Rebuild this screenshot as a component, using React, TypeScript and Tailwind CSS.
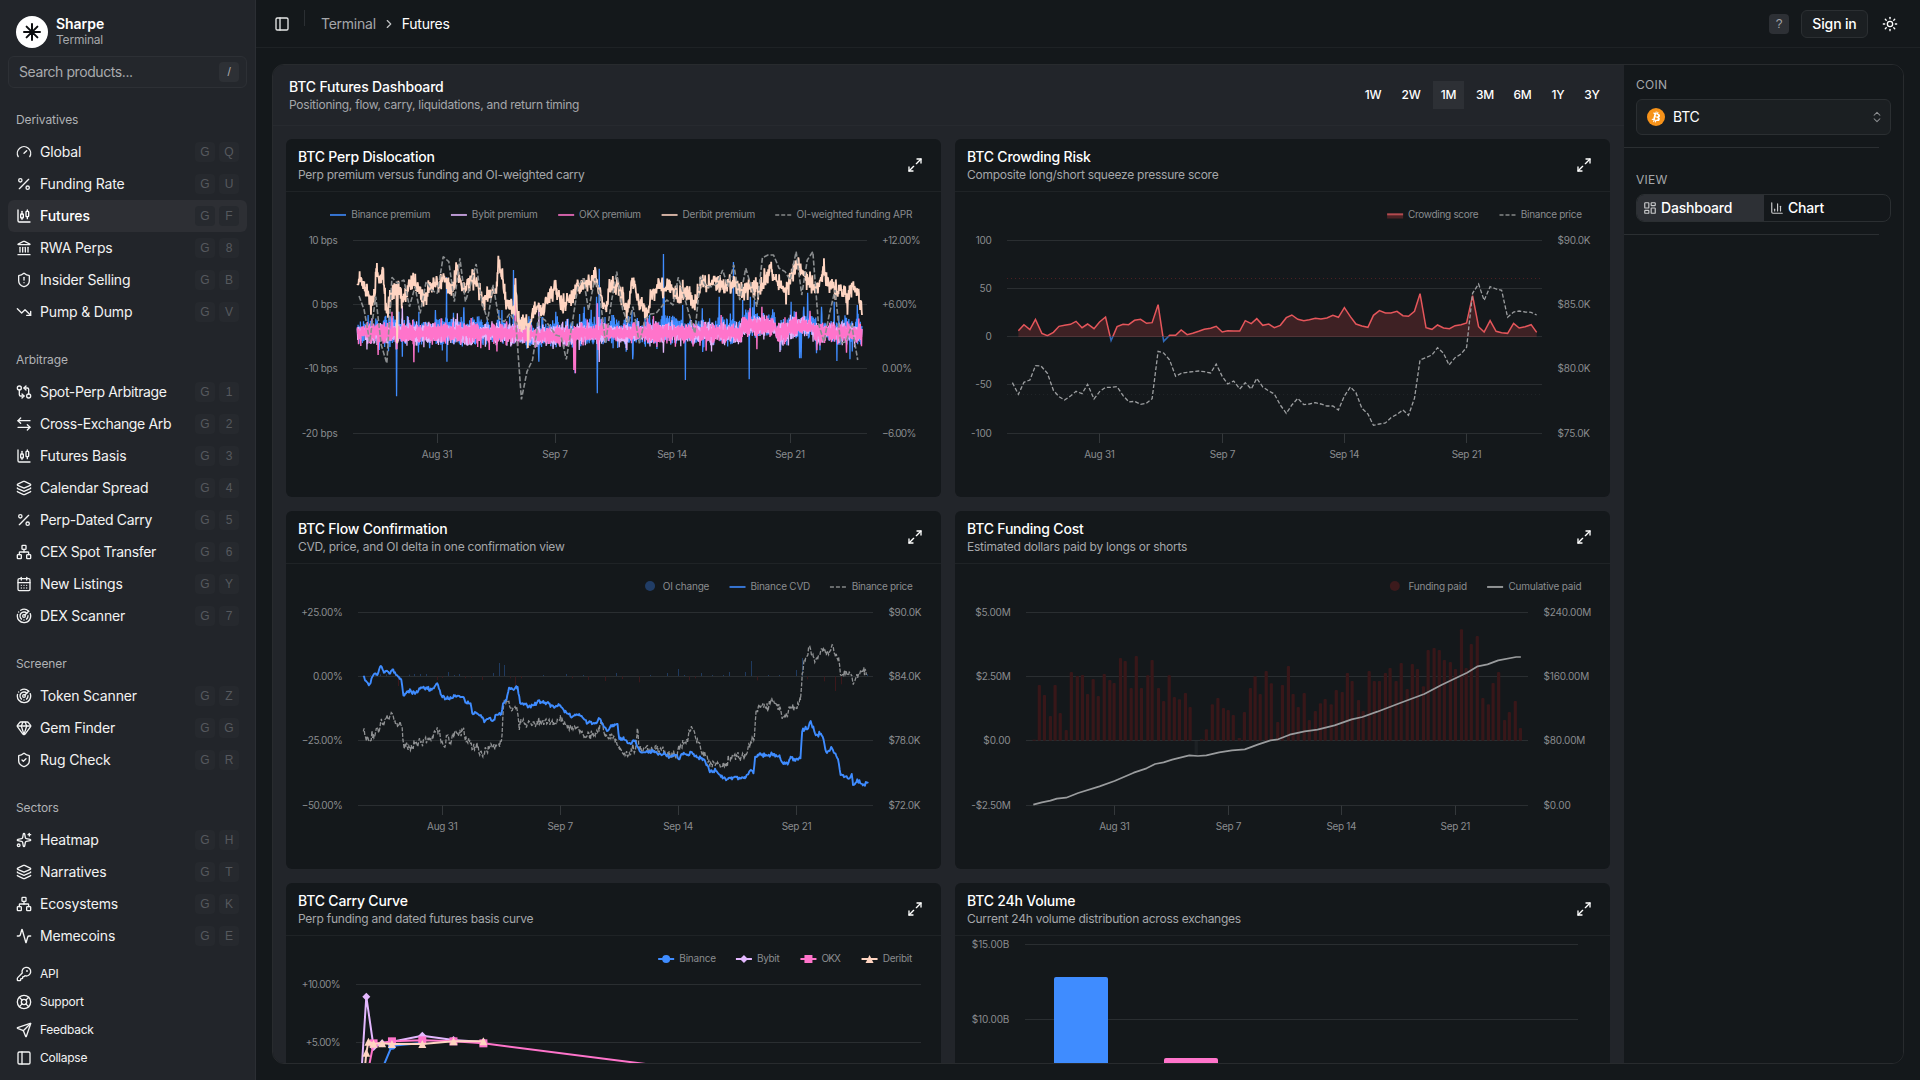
import React from "react";
import {
  Activity,
  CalendarDays,
  ChartCandlestick,
  ChevronRight,
  ChevronsUpDown,
  Gem,
  GitCompareArrows,
  KeyRound,
  Landmark,
  Layers,
  LayoutDashboard,
  LifeBuoy,
  Maximize2,
  Network,
  PanelLeft,
  Percent,
  Radar,
  Send,
  ShieldAlert,
  ShieldCheck,
  Sparkles,
  Sun,
  TrendingDown,
} from "lucide-react";

type IconType = React.ComponentType<{ className?: string; strokeWidth?: number }>;

const svgBase = {
  viewBox: "0 0 24 24",
  fill: "none",
  stroke: "currentColor",
  strokeLinecap: "round" as const,
  strokeLinejoin: "round" as const,
};

const GaugeIcon: IconType = ({ className }) => (
  <svg {...svgBase} strokeWidth={2} className={className}>
    <path d="m12 14 4-4" />
    <path d="M3.34 19a10 10 0 1 1 17.32 0" />
  </svg>
);

const SwapIcon: IconType = ({ className }) => (
  <svg {...svgBase} strokeWidth={2} className={className}>
    <path d="M21 7H3" />
    <path d="m7 3-4 4 4 4" />
    <path d="M3 17h18" />
    <path d="m17 13 4 4-4 4" />
  </svg>
);

const ChartColumnIcon: IconType = ({ className }) => (
  <svg {...svgBase} strokeWidth={2} className={className}>
    <path d="M3 3v16a2 2 0 0 0 2 2h16" />
    <path d="M18 17V9" />
    <path d="M13 17V5" />
    <path d="M8 17v-3" />
  </svg>
);

type Item = [string, IconType, string];

const groups: { title: string; items: Item[] }[] = [
  {
    title: "Derivatives",
    items: [
      ["Global", GaugeIcon, "Q"],
      ["Funding Rate", Percent, "U"],
      ["Futures", ChartCandlestick, "F"],
      ["RWA Perps", Landmark, "8"],
      ["Insider Selling", ShieldAlert, "B"],
      ["Pump & Dump", TrendingDown, "V"],
    ],
  },
  {
    title: "Arbitrage",
    items: [
      ["Spot-Perp Arbitrage", GitCompareArrows, "1"],
      ["Cross-Exchange Arb", SwapIcon, "2"],
      ["Futures Basis", ChartCandlestick, "3"],
      ["Calendar Spread", Layers, "4"],
      ["Perp-Dated Carry", Percent, "5"],
      ["CEX Spot Transfer", Network, "6"],
      ["New Listings", CalendarDays, "Y"],
      ["DEX Scanner", Radar, "7"],
    ],
  },
  {
    title: "Screener",
    items: [
      ["Token Scanner", Radar, "Z"],
      ["Gem Finder", Gem, "G"],
      ["Rug Check", ShieldCheck, "R"],
    ],
  },
  {
    title: "Sectors",
    items: [
      ["Heatmap", Sparkles, "H"],
      ["Narratives", Layers, "T"],
      ["Ecosystems", Network, "K"],
      ["Memecoins", Activity, "E"],
    ],
  },
];

function Kbd({ children }: { children: string }) {
  return (
    <kbd className="flex size-5 items-center justify-center rounded-sm bg-[#26292e] font-['Liberation_Sans'] text-xs text-[#56595e]">
      {children}
    </kbd>
  );
}

function Sidebar() {
  const footer: [string, IconType][] = [
    ["API", KeyRound],
    ["Support", LifeBuoy],
    ["Feedback", Send],
    ["Collapse", PanelLeft],
  ];
  return (
    <aside className="flex h-full w-64 shrink-0 flex-col border-r border-[#2b2e33] bg-[#22252a] px-2 pt-4 pb-2">
      <div className="flex h-8 items-center gap-2 pl-2">
        <div className="flex size-8 items-center justify-center rounded-full bg-white">
          <svg viewBox="0 0 18 18" className="size-[18px]" stroke="#0b0d0f" strokeWidth="2" strokeLinecap="round">
            <path d="M9 1v16M1 9h16M3.6 3.6l10.8 10.8M14.4 3.6L3.6 14.4" />
          </svg>
        </div>
        <div className="flex flex-col pb-0.5">
          <span className="text-sm leading-[17px] font-semibold tracking-[-0.05px] text-white">Sharpe</span>
          <span className="text-xs leading-4 tracking-[-0.2px] text-[#a5a7aa]">Terminal</span>
        </div>
      </div>
      <div className="mt-2 flex h-8 shrink-0 items-center justify-between rounded-md border border-[#2d3035] bg-[#24272c] pr-[7px] pl-2.5 text-sm tracking-[-0.42px] text-[#a9abae]">
        <span>Search products...</span>
        <kbd className="flex size-5 items-center justify-center rounded-sm bg-[#2d3035] font-['Liberation_Sans'] text-xs text-[#a9abae]">/</kbd>
      </div>
      <nav className="mt-4 flex flex-col gap-4">
        {groups.map((g) => (
          <div key={g.title}>
            <div className="flex h-8 items-center px-2 text-xs tracking-[-0.1px] text-[#b0b2b5]">{g.title}</div>
            {g.items.map(([name, Icon, key]) => (
              <div
                key={name}
                className={
                  name === "Futures"
                    ? "flex h-8 items-center gap-2 rounded-md bg-[#2d2f34] px-2 text-sm font-medium text-white"
                    : "flex h-8 items-center gap-2 rounded-md px-2 text-sm text-[#f2f3f3]"
                }
              >
                <Icon className="size-4 shrink-0" />
                <span
                  className={
                    name.length > 15
                      ? "flex-1 tracking-[-0.35px] whitespace-nowrap"
                      : name === "Futures"
                        ? "flex-1 tracking-[-0.05px] whitespace-nowrap"
                        : "flex-1 tracking-[-0.17px] whitespace-nowrap"
                  }
                >
                  {name}
                </span>
                <span className="flex gap-1">
                  <Kbd>G</Kbd>
                  <Kbd>{key}</Kbd>
                </span>
              </div>
            ))}
          </div>
        ))}
      </nav>
      <div className="mt-auto">
        {footer.map(([name, Icon]) => (
          <div key={name} className="flex h-7 items-center gap-2 px-2 text-xs tracking-[-0.25px] text-[#f2f3f3]">
            <Icon className="size-4 shrink-0" />
            <span>{name}</span>
          </div>
        ))}
      </div>
    </aside>
  );
}

function Header() {
  return (
    <header className="flex h-12 shrink-0 items-center justify-between border-b border-[#1e2225] pr-[22px] pl-[18px]">
      <div className="flex items-center text-sm tracking-[-0.25px]">
        <PanelLeft className="size-4 text-[#e6e7e7]" />
        <div className="mr-4 ml-3.5 h-4 w-px -translate-y-1.5 bg-[#2b2f33]" />
        <span className="text-[#a5a7aa]">Terminal</span>
        <ChevronRight className="mx-1.5 size-3.5 text-[#c0c2c4]" />
        <span className="text-white">Futures</span>
      </div>
      <div className="flex items-center">
        <kbd className="mr-3 flex size-5 items-center justify-center rounded-sm bg-[#2d3035] font-['Liberation_Sans'] text-xs text-[#a5a7aa]">?</kbd>
        <button className="mr-3.5 h-7 w-[67px] rounded-md border border-[#2b2f32] bg-[#1b1f22] text-sm font-medium tracking-[-0.15px] text-white">Sign in</button>
        <Sun className="size-4 text-white" />
      </div>
    </header>
  );
}

/* Chart data is stored in plot units: 1568 across 670px and 3 per pixel down. */
const KX = 670 / 1568;
const KY = 1 / 3;
type Pt = [number, number];

function parse(s: string): Pt[] {
  return s
    .trim()
    .split(/\s+/)
    .map((p) => p.split(",").map(Number) as Pt);
}

function line(pts: Pt[]): string {
  return pts.map(([x, y], i) => (i ? "L" : "M") + (x * KX).toFixed(2) + " " + (y * KY).toFixed(2)).join("");
}

function rng(seed: number) {
  let s = seed;
  return () => {
    s = (s * 1664525 + 1013904223) % 4294967296;
    return s / 4294967296;
  };
}

function noisy(anchors: Pt[], step: number, amp: number, seed: number): Pt[] {
  const r = rng(seed);
  const out: Pt[] = [];
  for (let i = 0; i < anchors.length - 1; i++) {
    const [x0, y0] = anchors[i];
    const [x1, y1] = anchors[i + 1];
    out.push([x0, y0]);
    for (let x = x0 + step; x < x1; x += step) {
      const t = (x - x0) / (x1 - x0);
      out.push([x, y0 + (y1 - y0) * t + (r() + r() - 1) * amp]);
    }
  }
  out.push(anchors[anchors.length - 1]);
  return out;
}

const BAND_STEP = 0.9;

function band(seed: number, up: number, down: number, tail: number, spikes: Pt[]): Pt[] {
  const r = rng(seed);
  const out: Pt[] = [];
  let side = 1;
  let swell = 1;
  for (let x = 181; x <= 1362; x += BAND_STEP) {
    let c = 428;
    if (x > 540 && x < 690) c = 435;
    if (x > 1080 && x < 1160) c = 408;
    if (x > 1190 && x < 1250) c = 410;
    side = -side;
    swell += (r() - 0.5) * 0.4;
    swell = Math.min(1.3, Math.max(0.75, swell));
    let d = (0.2 + 0.8 * r()) * (side < 0 ? up : down) * swell;
    if (r() < 0.1) d += r() * tail;
    out.push([x, c + side * d]);
  }
  spikes.forEach(([x, y]) => {
    const i = Math.round((x - 181) / BAND_STEP);
    if (out[i]) out[i] = [out[i][0], y];
  });
  return out;
}

const binancePremium = band(
  11, 41, 30, 32,
  parse("273,619 286,500 350,475 364,360 391,515 390,262 430,352 512,360 546,240 606,515 645,365 690,550 701,372 712,350 743,610 747,236 741,320 780,375 824,360 825,508 897,192 899,320 942,345 949,570 988,355 989,486 1028,320 1061,216 1098,568 1101,320 1110,330 1083,330 1196,335 1216,505 1220,505 1235,308 1226,350 1267,350 1297,335 1303,513 1334,508 1351,345 1256,490 810,485"),
);
const bybitPremium = band(23, 27, 31, 22, parse("286,348 300,380 415,370 747,516 606,340 700,480 897,488 1170,486 1340,400"));
const okxPremium = band(37, 25, 27, 26, parse("230,495 313,517 262,365 470,475 490,480 551,265 691,550 743,340 688,540 744,480 1032,375 1100,355 1128,350 1208,365 1326,488 1240,362 1116,478"));

const deribitPremium = noisy(
  parse(
    "181,285 190,265 200,300 212,345 223,300 225,235 232,280 238,270 240,231 244,300 250,370 262,310 272,290 274,460 276,290 285,325 300,300 312,270 325,300 340,320 350,290 370,280 385,265 395,290 405,280 415,232 425,290 440,285 455,262 465,290 475,340 485,320 500,310 508,290 511,197 515,250 522,270 530,350 545,350 549,360 551,265 556,395 572,385 579,400 580,474 583,400 590,370 600,350 615,360 630,320 640,300 644,275 650,320 660,345 675,330 690,310 700,290 715,280 735,270 737,232 741,290 750,300 762,360 770,300 787,285 789,268 805,340 812,370 820,310 824,263 835,320 858,372 870,310 890,280 900,300 915,290 930,320 945,300 960,320 970,350 985,280 1000,285 1020,275 1040,290 1060,270 1080,310 1100,290 1120,300 1143,250 1145,228 1160,270 1185,310 1200,250 1210,225 1213,202 1220,240 1235,270 1250,290 1270,260 1273,205 1277,270 1290,290 1310,300 1326,310 1328,374 1331,300 1345,290 1355,330 1362,375",
  ),
  0.9,
  38,
  5,
);
const fundingApr = parse(
  "185,318 197,360 210,455 224,320 237,465 250,520 262,262 275,280 290,270 303,350 316,290 328,370 342,275 355,300 368,310 382,200 395,215 408,335 421,205 434,335 447,280 459,222 472,335 486,390 499,285 512,385 525,395 538,370 552,400 565,628 578,545 591,510 606,380 620,390 632,410 645,435 658,440 670,508 684,400 697,290 710,265 722,360 737,265 748,310 762,460 775,340 788,245 802,360 815,400 826,350 841,460 854,390 867,372 880,370 893,350 905,330 920,345 932,262 945,315 958,375 971,430 984,258 997,290 1010,290 1023,280 1036,240 1048,290 1062,225 1076,330 1090,235 1103,290 1116,350 1129,203 1142,195 1155,195 1168,235 1182,245 1194,270 1208,185 1221,315 1234,210 1247,185 1260,400 1273,455 1286,370 1299,300 1312,460 1325,455 1338,405 1352,510",
);

const crowding = parse(
  "160,422 173,404 187,419 200,388 215,430 228,437 242,427 255,409 268,406 282,403 295,394 309,413 322,402 337,416 350,396 364,381 377,452 391,410 405,403 418,404 432,391 446,388 460,400 473,398 487,344 500,454 514,436 528,436 541,420 555,434 568,430 582,424 595,418 610,415 623,409 637,426 650,422 664,423 678,423 691,392 705,401 718,386 732,406 746,402 759,413 773,406 787,383 800,375 814,388 828,392 841,389 855,385 868,387 882,384 896,376 909,382 923,353 937,380 950,402 964,408 978,412 991,376 1005,362 1019,369 1032,369 1046,364 1060,377 1073,379 1087,364 1100,311 1114,413 1128,418 1141,405 1155,414 1169,416 1182,407 1196,404 1209,399 1223,317 1237,410 1250,426 1264,392 1278,424 1291,428 1305,430 1319,400 1332,414 1346,410 1360,404 1373,427",
);
const crowdingPrice = parse(
  "146,578 160,613 173,577 187,570 200,527 213,528 228,550 242,601 255,620 268,630 282,618 295,604 309,611 322,583 337,627 350,605 364,592 378,592 391,590 405,617 419,636 432,634 446,643 459,640 473,626 487,484 500,489 514,510 528,559 541,550 560,546 582,543 595,545 610,549 623,522 637,559 650,582 664,573 678,597 691,578 705,597 718,565 732,591 746,603 759,612 773,645 787,670 800,645 814,625 828,644 841,642 855,638 868,642 882,648 896,648 909,660 923,618 937,591 950,608 964,655 978,672 991,706 1005,702 1019,699 1032,683 1046,673 1060,660 1073,676 1087,625 1100,510 1128,495 1141,473 1155,490 1168,525 1182,503 1196,492 1209,472 1223,310 1237,282 1250,331 1264,290 1278,297 1291,301 1305,382 1319,366 1332,363 1346,366 1360,367 1373,375",
);

const cvd = noisy(
  parse(
    "195,348 208,376 220,342 230,338 236,318 243,338 250,332 256,341 263,328 272,345 284,360 289,407 300,393 318,398 330,382 345,387 360,385 368,370 380,412 395,415 410,406 430,412 434,428 446,430 450,460 460,458 470,465 478,487 488,476 500,480 504,465 518,462 522,430 530,420 536,383 545,388 556,381 562,430 585,440 600,431 605,422 612,428 625,428 640,440 656,436 664,450 670,458 680,470 700,462 710,475 720,488 740,490 748,476 758,500 765,513 775,495 790,492 794,537 805,538 815,550 832,545 836,560 846,578 860,575 880,575 885,584 900,582 910,594 925,585 933,598 945,578 952,585 962,576 975,592 992,598 1000,615 1006,637 1020,632 1030,645 1046,658 1060,652 1075,653 1088,655 1092,645 1104,632 1108,640 1112,590 1125,583 1140,587 1155,582 1170,592 1178,612 1190,608 1195,590 1204,602 1218,595 1222,515 1230,500 1234,508 1242,483 1252,520 1260,530 1262,515 1270,530 1278,575 1292,565 1298,580 1306,598 1312,645 1322,650 1332,656 1338,642 1341,675 1352,663 1365,673 1376,670",
  ),
  2,
  7,
  3,
);
const flowPrice = noisy(
  parse(
    "195,514 208,544 218,522 232,514 238,485 242,498 250,465 255,480 262,460 270,490 284,498 289,550 310,560 330,545 350,538 358,535 368,502 384,560 393,525 398,545 405,520 412,515 422,518 428,510 436,545 444,540 450,568 462,560 475,584 490,562 505,560 518,545 523,440 532,425 542,452 550,440 555,450 560,510 564,488 580,492 600,485 610,480 640,485 652,478 656,465 662,485 675,505 690,500 700,510 712,535 725,525 738,520 750,492 765,530 785,538 795,572 812,585 822,568 832,570 836,505 842,572 860,568 880,566 900,572 912,585 930,580 945,545 950,550 963,500 975,545 990,575 1000,590 1006,620 1025,610 1040,620 1050,598 1070,588 1088,590 1098,555 1110,535 1114,455 1130,430 1138,445 1155,420 1162,435 1170,440 1176,470 1186,465 1195,440 1210,445 1218,420 1222,340 1230,295 1240,260 1248,290 1258,300 1265,275 1275,268 1285,280 1293,255 1300,290 1308,300 1312,345 1325,335 1338,345 1342,372 1350,342 1368,332 1372,345",
  ),
  1.8,
  17,
  8,
);
const oiUp = parse(
  "212,346 223,343 236,343 249,343 303,344 315,342 329,342 343,342 394,336 408,345 420,342 500,339 514,309 525,315 616,345 670,342 710,345 788,339 867,345 907,339 932,327 946,345 986,339 1012,345 1037,345 1052,336 1090,336 1103,303 1143,345 1169,345 1209,330 1223,294 1376,342",
);
const oiDown = parse(
  "277,378 368,360 381,354 434,355 447,353 474,360 540,355 551,378 565,355 684,355 722,360 762,363 801,357 841,367 958,361 972,355 1117,361 1234,358 1275,364 1300,393 1314,373",
);

const fundingBars = parse(
  "197,539 209,375 221,405 235,468 246,375 258,459 272,510 284,336 298,348 310,345 322,402 335,357 347,408 361,342 374,360 384,369 399,294 410,303 424,384 436,288 448,384 463,346 473,300 488,384 500,423 513,346 525,411 537,418 551,399 562,441 589,538 600,508 614,433 627,414 640,444 651,450 663,465 677,534 689,456 703,384 714,349 726,402 740,333 752,370 767,486 778,375 792,318 803,402 815,441 829,399 841,480 855,453 867,430 878,417 892,433 904,390 918,396 930,339 941,363 956,420 967,453 981,333 993,363 1005,363 1019,339 1030,324 1044,363 1056,309 1070,387 1082,312 1094,327 1108,379 1119,270 1133,264 1145,270 1157,300 1171,306 1183,327 1197,208 1208,324 1220,252 1234,228 1247,414 1260,433 1271,369 1284,336 1298,480 1309,456 1323,423 1335,504",
);
const cumulative = parse(
  "195,734 215,727 235,722 250,716 272,713 300,699 350,679 385,663 430,638 460,625 480,612 500,607 520,599 560,586 580,588 600,586 630,577 660,571 690,568 720,554 750,541 768,538 795,524 830,514 860,509 900,496 940,478 965,471 1000,455 1055,428 1110,402 1150,375 1183,355 1210,338 1235,319 1258,313 1283,301 1325,291 1336,291",
);

const GRID = "#2a2e31";
const LABEL = "#8a8c8f";
const BLUE = "#3f8cff";
const PURPLE = "#e4b8ff";
const PINK = "#ff74cb";
const PEACH = "#ffd5c2";

interface LabelProps {
  x: number;
  y: number;
  w?: number;
  anchor?: "start" | "middle" | "end";
  children: string;
}

function Label({ x, y, w, anchor, children }: LabelProps) {
  return (
    <text x={x * KX} y={y * KY + 3.8} textAnchor={anchor ?? "start"} fontSize="10" fill={LABEL} textLength={w ? w * KX : undefined}>
      {children}
    </text>
  );
}

interface AxisProps {
  x0: number;
  x1: number;
  ys: number[];
  left: string[];
  leftX: number;
  leftW: number[];
  right?: string[];
  rightX?: number;
  rightW?: number[];
  ticks?: number[];
}

function Axes({ x0, x1, ys, left, leftX, leftW, right = [], rightX = 0, rightW = [], ticks = [] }: AxisProps) {
  const dates = ["Aug 31", "Sep 7", "Sep 14", "Sep 21"];
  const dateW = [72, 60, 70, 70];
  const last = ys[ys.length - 1];
  const bottom = Math.floor(last * KY) + 0.5;
  return (
    <g>
      {ys.map((y) => (
        <path key={y} d={`M${Math.round(x0 * KX)} ${Math.floor(y * KY) + 0.5}H${Math.round(x1 * KX)}`} stroke={GRID} />
      ))}
      {left.map((t, i) => (
        <Label key={t} x={leftX} y={ys[i]} w={leftW[i]} anchor="end">
          {t}
        </Label>
      ))}
      {right.map((t, i) => (
        <Label key={t} x={rightX} y={ys[0] + ((last - ys[0]) * i) / (right.length - 1) - (i > 0 && i < 3 ? 1.5 : 0)} w={rightW[i]}>
          {t}
        </Label>
      ))}
      {ticks.map((t, i) => (
        <g key={t}>
          <path d={`M${Math.floor(t * KX) + 0.5} ${bottom}v9.5`} stroke="#34383b" />
          <Label x={t} y={last + 63} w={dateW[i]} anchor="middle">
            {dates[i]}
          </Label>
        </g>
      ))}
    </g>
  );
}

function Swatch({ x, y, color, dashed, opacity = 0.8 }: { x: number; y: number; color: string; dashed?: boolean; opacity?: number }) {
  return (
    <path
      d={`M${x * KX} ${y * KY + 0.3}h16`}
      stroke={color}
      strokeWidth={dashed ? 1.5 : 2}
      strokeDasharray={dashed ? "4 2" : undefined}
      opacity={opacity}
    />
  );
}

function PerpDislocation() {
  return (
    <svg viewBox="6 2 655 305" className="block h-[305px] w-full">
      <Axes
        x0={171} x1={1374} ys={[151, 343, 535, 730]}
        left={["10 bps", "0 bps", "-10 bps", "-20 bps"]} leftX={135} leftW={[68, 60, 78, 84]}
        right={["+12.00%", "+6.00%", "0.00%", "−6.00%"]} rightX={1409} rightW={[90, 82, 70, 80]}
        ticks={[368, 644, 918, 1194]}
      />
      <Swatch x={117} y={74} color={BLUE} />
      <Label x={167} y={74} w={185}>Binance premium</Label>
      <Swatch x={400} y={74} color={PURPLE} />
      <Label x={449} y={74} w={154}>Bybit premium</Label>
      <Swatch x={651} y={74} color={PINK} />
      <Label x={700} y={74} w={145}>OKX premium</Label>
      <Swatch x={893} y={74} color={PEACH} />
      <Label x={942} y={74} w={170}>Deribit premium</Label>
      <Swatch x={1159} y={74} color="#a0a2a4" dashed />
      <Label x={1209} y={74} w={271}>OI-weighted funding APR</Label>
      <g fill="none" strokeLinejoin="bevel">
        <path d={line(binancePremium)} stroke={BLUE} strokeWidth="1.3" />
        <path d={line(bybitPremium)} stroke={PURPLE} strokeWidth="1.3" />
        <path d={line(okxPremium)} stroke={PINK} strokeWidth="1.4" />
        <path d={line(deribitPremium)} stroke={PEACH} strokeWidth="1.8" />
        <path d={line(fundingApr)} stroke="#8b8e90" strokeWidth="1.6" strokeDasharray="5 2" />
      </g>
    </svg>
  );
}

function CrowdingRisk() {
  const d = line(crowding);
  return (
    <svg viewBox="5 2 655 305" className="block h-[305px] w-full">
      <defs>
        <clipPath id="above"><rect x="0" y="0" width="670" height="146.5" /></clipPath>
        <clipPath id="below"><rect x="0" y="146.5" width="670" height="160" /></clipPath>
      </defs>
      <Axes
        x0={133} x1={1385} ys={[151, 295, 439, 583, 730]}
        left={["100", "50", "0", "-50", "-100"]} leftX={98} leftW={[38, 29, 15, 39, 49]}
        right={["$90.0K", "$85.0K", "$80.0K", "$75.0K"]} rightX={1422} rightW={[77, 77, 77, 76]}
        ticks={[350, 638, 923, 1209]}
      />
      <path d="M57 88.5H592" stroke="#4c2024" strokeDasharray="1 3" />
      <path d="M57 204.5H592" stroke="#212528" strokeDasharray="1 3" />
      <rect x={1023 * KX} y="24.5" width="16" height="4" fill="#4a2225" />
      <Swatch x={1023} y={72} color="#e05a5f" opacity={0.75} />
      <Label x={1072} y={74} w={165}>Crowding score</Label>
      <Swatch x={1286} y={74} color="#a0a2a4" dashed />
      <Label x={1336} y={74} w={143}>Binance price</Label>
      <g clipPath="url(#above)">
        <path d={`${d}V146.5H${160 * KX}Z`} fill="#e5484d" fillOpacity="0.2" />
        <path d={d} fill="none" stroke="#e5565b" strokeWidth="1.5" />
        <path d={`M${160 * KX} 146.5H${1373 * KX}`} stroke="#e5565b" opacity="0.35" />
      </g>
      <path clipPath="url(#below)" d={d} fill="none" stroke="#2f6ab8" strokeWidth="1.5" />
      <path d={line(crowdingPrice)} fill="none" stroke="#9c9ea0" strokeWidth="1.3" strokeDasharray="4 2" />
    </svg>
  );
}

function FlowConfirmation() {
  return (
    <svg viewBox="6 4 655 305" className="block h-[305px] w-full">
      <Axes
        x0={183} x1={1388} ys={[157, 349, 541, 736]}
        left={["+25.00%", "0.00%", "−25.00%", "−50.00%"]} leftX={147} leftW={[97, 70, 96, 96]}
        right={["$90.0K", "$84.0K", "$78.0K", "$72.0K"]} rightX={1424} rightW={[77, 76, 75, 75]}
        ticks={[380, 656, 932, 1209]}
      />
      <circle cx={866 * KX} cy="26" r="5" fill="#213d66" />
      <Label x={896} y={80} w={109}>OI change</Label>
      <Swatch x={1052} y={80} color={BLUE} />
      <Label x={1101} y={80} w={140}>Binance CVD</Label>
      <Swatch x={1287} y={80} color="#a0a2a4" dashed />
      <Label x={1338} y={80} w={143}>Binance price</Label>
      {oiUp.map(([x, y]) => (
        <path key={x} d={`M${Math.floor(x * KX) + 0.5} 116V${y * KY}`} stroke="#1f3a5f" />
      ))}
      {oiDown.map(([x, y]) => (
        <path key={x} d={`M${Math.floor(x * KX) + 0.5} 116.5V${y * KY}`} stroke="#3c181b" />
      ))}
      <path d={line(flowPrice)} fill="none" stroke="#8f9193" strokeWidth="1.3" strokeDasharray="4 1.6" />
      <path d={line(cvd)} fill="none" stroke={BLUE} strokeWidth="1.9" strokeLinejoin="round" />
    </svg>
  );
}

function FundingCost() {
  return (
    <svg viewBox="5 4 655 305" className="block h-[305px] w-full">
      <Axes
        x0={178} x1={1353} ys={[157, 349, 541, 736]}
        left={["$5.00M", "$2.50M", "$0.00", "-$2.50M"]} leftX={142} leftW={[83, 82, 64, 92]}
        right={["$240.00M", "$160.00M", "$80.00M", "$0.00"]} rightX={1389} rightW={[112, 107, 98, 64]}
        ticks={[385, 652, 916, 1183]}
      />
      <circle cx={1041 * KX} cy="26" r="5" fill="#3c1a1c" />
      <Label x={1073} y={80} w={137}>Funding paid</Label>
      <Swatch x={1257} y={80} color="#b0b2b3" />
      <Label x={1307} y={80} w={171}>Cumulative paid</Label>
      {fundingBars.map(([x, y]) => (
        <rect key={x} x={x * KX - 1.6} y={y * KY} width="3.2" height={180.7 - y * KY} rx={y > 530 ? 0 : 1} fill="#381719" />
      ))}
      <rect x={576 * KX - 1.6} y="181" width="3.4" height="15" fill="#1d2124" />
      <path d={line(cumulative)} fill="none" stroke="#9a9c9e" strokeWidth="1.7" strokeLinejoin="round" />
    </svg>
  );
}

type Shape = "circle" | "diamond" | "square" | "triangle";

function Mark({ x, y, shape, color }: { x: number; y: number; shape: Shape; color: string }) {
  const cx = x * KX;
  const cy = y * KY;
  if (shape === "circle") return <circle cx={cx} cy={cy} r="4" fill={color} />;
  if (shape === "square") return <rect x={cx - 4} y={cy - 4} width="8" height="8" fill={color} />;
  if (shape === "diamond") return <path d={`M${cx} ${cy - 4}l4 4l-4 4l-4-4Z`} fill={color} />;
  return <path d={`M${cx} ${cy - 4}l4 8h-8Z`} fill={color} />;
}

function CarryCurve() {
  const series: { name: string; shape: Shape; color: string; lx: number; w: number; pts: Pt[]; marks: number[] }[] = [
    { name: "Binance", shape: "circle", color: BLUE, lx: 885, w: 86, pts: parse("225,640 262,527 333,519"), marks: [1] },
    { name: "Bybit", shape: "diamond", color: PURPLE, lx: 1067, w: 53, pts: parse("191,600 202,380 219,531 239,520 262,515 333,497 406,510 476,516"), marks: [1, 2, 3, 4, 5, 6, 7] },
    { name: "OKX", shape: "square", color: PINK, lx: 1218, w: 45, pts: parse("208,590 219,520 239,519 262,514 333,511 406,514 476,520 880,586"), marks: [1, 3, 4, 5, 6] },
    { name: "Deribit", shape: "triangle", color: PEACH, lx: 1361, w: 69, pts: parse("199,590 202,548 207,515 219,521 239,520 262,522 333,522 406,514 476,514"), marks: [1, 2, 3, 4, 5, 6, 7, 8] },
  ];
  return (
    <svg viewBox="6 66 655 305" className="block h-[305px] w-full shrink-0">
      <Axes x0={178} x1={1500} ys={[343, 517]} left={["+10.00%", "+5.00%"]} leftX={142} leftW={[91, 82]} />
      {series.map((s) => (
        <g key={s.name}>
          <Swatch x={s.lx} y={266} color={s.color} opacity={1} />
          <Mark x={s.lx + 18.7} y={267} shape={s.shape} color={s.color} />
          <Label x={s.lx + 49.5} y={266} w={s.w}>{s.name}</Label>
          <path d={line(s.pts)} fill="none" stroke={s.color} strokeWidth="2" strokeLinejoin="bevel" />
          {s.marks.map((i) => (
            <Mark key={i} x={s.pts[i][0]} y={s.pts[i][1]} shape={s.shape} color={s.color} />
          ))}
        </g>
      ))}
    </svg>
  );
}

function VolumeChart() {
  return (
    <svg viewBox="5 66 655 305" className="block h-[305px] w-full shrink-0">
      <Axes x0={176} x1={1470} ys={[223, 447]} left={["$15.00B", "$10.00B"]} leftX={139} leftW={[88, 88]} />
      <rect x="104" y="107" width="54" height="140" rx="2" fill={BLUE} />
      <rect x="214" y="188" width="54" height="60" rx="2" fill={PINK} />
    </svg>
  );
}

function Card({ title, sub, children }: { title: string; sub: string; children: React.ReactNode }) {
  return (
    <section className="h-[358px] overflow-hidden rounded-md bg-[#14181b]">
      <div className="flex h-[53px] items-center justify-between border-b border-[#1f2326] pr-[18px] pl-3">
        <div className="flex flex-col">
          <h2 className="pt-px text-sm leading-[18px] font-medium tracking-[-0.2px] text-white">{title}</h2>
          <p className="text-xs leading-[17px] tracking-[-0.25px] text-[#a5a7aa]">{sub}</p>
        </div>
        <Maximize2 className="size-4 text-white" />
      </div>
      {children}
    </section>
  );
}

function Dashboard() {
  const ranges = [
    ["1W", "w-8"],
    ["2W", "w-[35px]"],
    ["1M", "w-[31px] bg-[#2d3035]"],
    ["3M", "w-[33px]"],
    ["6M", "w-[33px]"],
    ["1Y", "w-[29px]"],
    ["3Y", "w-[30px]"],
  ];
  return (
    <main className="flex w-[1351px] shrink-0 flex-col bg-[#22252a]">
      <div className="flex h-[61px] shrink-0 items-center justify-between border-b border-[#272a2f] pr-[17px] pl-4">
        <div className="flex flex-col">
          <h1 className="pt-px text-sm leading-[18px] font-medium tracking-[-0.17px] text-white">BTC Futures Dashboard</h1>
          <p className="text-xs leading-[17px] tracking-[-0.24px] text-[#a5a7aa]">Positioning, flow, carry, liquidations, and return timing</p>
        </div>
        <div className="flex gap-[4.5px]">
          {ranges.map(([t, c]) => (
            <button key={t} className={`h-7 text-xs font-medium tracking-[-0.2px] text-white ${c}`}>{t}</button>
          ))}
        </div>
      </div>
      <div className="grid grid-cols-2 gap-3.5 pt-[13px] pr-3.5 pl-[13px]">
        <Card title="BTC Perp Dislocation" sub="Perp premium versus funding and OI-weighted carry"><PerpDislocation /></Card>
        <Card title="BTC Crowding Risk" sub="Composite long/short squeeze pressure score"><CrowdingRisk /></Card>
        <Card title="BTC Flow Confirmation" sub="CVD, price, and OI delta in one confirmation view"><FlowConfirmation /></Card>
        <Card title="BTC Funding Cost" sub="Estimated dollars paid by longs or shorts"><FundingCost /></Card>
        <Card title="BTC Carry Curve" sub="Perp funding and dated futures basis curve"><CarryCurve /></Card>
        <Card title="BTC 24h Volume" sub="Current 24h volume distribution across exchanges"><VolumeChart /></Card>
      </div>
    </main>
  );
}

function Controls() {
  return (
    <aside className="flex flex-1 flex-col bg-[#14181b] text-[#a5a7aa]">
      <div className="px-3 pt-3">
        <div className="text-xs leading-4 tracking-[0.25px]">COIN</div>
        <div className="mt-1.5 flex h-9 items-center rounded-md border border-[#2b2f32] bg-[#1b1f22] pr-1.5 pl-2.5 text-sm text-white">
          <svg viewBox="0 0 32 32" className="mr-2 size-[18px]">
            <circle cx="16" cy="16" r="16" fill="#f7931a" />
            <path
              fill="#fff"
              d="M23.19 14.02c.31-2.1-1.28-3.22-3.46-3.98l.71-2.83-1.73-.43-.69 2.76c-.45-.11-.92-.22-1.38-.33l.69-2.77-1.72-.43-.71 2.83c-.38-.08-.75-.17-1.1-.26l-2.38-.6-.46 1.85s1.28.3 1.25.31c.7.18.83.64.81 1.01l-.81 3.23c.05.01.11.03.18.06l-.18-.05-1.13 4.52c-.09.21-.3.53-.79.41.02.03-1.26-.31-1.26-.31l-.86 1.97 2.25.56c.42.1.83.21 1.23.32l-.71 2.86 1.72.43.71-2.83c.47.13.93.25 1.37.36l-.7 2.81 1.72.43.72-2.86c2.95.56 5.17.33 6.1-2.33.75-2.14-.04-3.38-1.59-4.19 1.13-.26 1.98-1 2.2-2.52zm-3.94 5.54c-.53 2.14-4.15.98-5.32.69l.95-3.8c1.17.29 4.93.87 4.37 3.11zm.54-5.57c-.49 1.95-3.5.96-4.47.72l.86-3.45c.98.24 4.12.69 3.61 2.73z"
            />
          </svg>
          <span className="flex-1 tracking-[-0.2px]">BTC</span>
          <ChevronsUpDown className="size-3.5 text-[#8f9194]" strokeWidth={1.75} />
        </div>
      </div>
      <div className="mt-3 mr-6 h-px bg-[#2b2f32]" />
      <div className="px-3 pt-6">
        <div className="text-xs leading-4 tracking-[0.25px]">VIEW</div>
        <div className="mt-[6px] flex h-7 overflow-hidden rounded-lg border border-[#2b2f32] text-sm font-medium tracking-[-0.2px] text-white">
          <div className="flex w-[127px] items-center gap-1 bg-[#2d3035] pl-1.5">
            <LayoutDashboard className="size-3.5 text-[#c9cacc]" />
            <span>Dashboard</span>
          </div>
          <div className="flex flex-1 items-center gap-1 pl-1.5">
            <ChartColumnIcon className="size-3.5 text-[#c9cacc]" />
            <span>Chart</span>
          </div>
        </div>
      </div>
      <div className="mt-3 mr-6 h-px bg-[#2b2f32]" />
    </aside>
  );
}

export default function App() {
  return (
    <div className="flex h-[1080px] w-[1920px] overflow-hidden bg-[#14181b] font-['Inter',sans-serif]">
      <Sidebar />
      <div className="flex min-w-0 flex-1 flex-col">
        <Header />
        <div className="mx-4 mt-4 flex h-[1000px] overflow-hidden rounded-xl border border-[#282b2e]">
          <Dashboard />
          <Controls />
        </div>
      </div>
    </div>
  );
}
